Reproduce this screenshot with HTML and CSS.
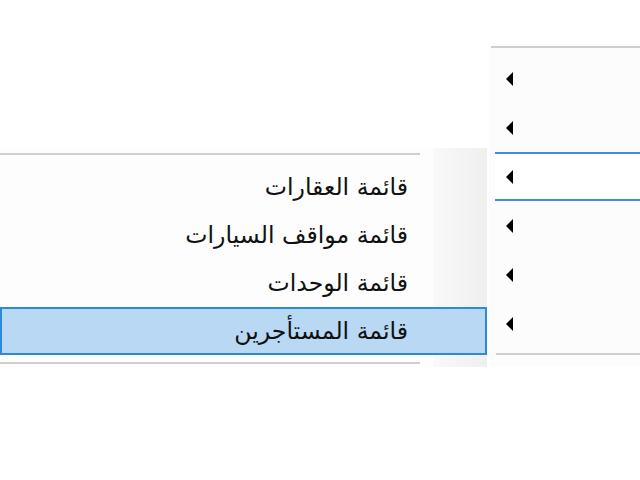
FILE: index.html
```html
<!DOCTYPE html>
<html lang="ar">

<head>
    <meta charset="UTF-8">
    <title>القوائم</title>
    <link rel="stylesheet" href="styles.css">
</head>

<body>
    <div class="desk">
        <div class="menu main-menu">
            <hr class="sep sep-top">
            <div class="item"><span class="arrow"></span></div>
            <div class="item"><span class="arrow"></span></div>
            <div class="item focus"><span class="arrow"></span></div>
            <div class="item"><span class="arrow"></span></div>
            <div class="item"><span class="arrow"></span></div>
            <div class="item"><span class="arrow"></span></div>
            <hr class="sep sep-bottom">
        </div>

        <div class="menu sub-menu" dir="rtl">
            <hr class="sep">
            <div class="subitem">قائمة العقارات</div>
            <div class="subitem">قائمة مواقف السيارات</div>
            <div class="subitem">قائمة الوحدات</div>
            <div class="subitem active">قائمة المستأجرين</div>
            <hr class="sep sep-low">
        </div>
    </div>
</body>

</html>
```

FILE: styles.css
```css
body {
    margin: 0;
    padding: 0;
    background-color: #ffffff;
    font-family: 'DejaVu Sans', 'Noto Sans', sans-serif;
}

.desk {
    position: relative;
    width: 640px;
    height: 480px;
    overflow: hidden;
}

.menu {
    position: absolute;
    box-sizing: border-box;
}

.sep {
    border: none;
    height: 2px;
    margin: 0;
    background-color: #cfcfcf;
}

.main-menu {
    left: 489px;
    top: 46px;
    width: 151px;
    height: 320px;
    background-color: #fcfcfc;
}

.main-menu .sep-top {
    margin: 0 0 6px 2px;
}

.main-menu .sep-bottom {
    margin: 5px 0 0 7px;
}

.item {
    height: 49px;
    box-sizing: border-box;
    display: flex;
    align-items: center;
    padding-left: 11px;
    margin-left: 6px;
}

.item.focus {
    border-top: 2px solid #3c8fe0;
    border-bottom: 2px solid #3c8fe0;
    background-color: #ffffff;
}

.arrow {
    width: 0;
    height: 0;
    border-top: 7px solid transparent;
    border-bottom: 7px solid transparent;
    border-right: 7px solid #000000;
}

.sub-menu {
    left: 0;
    top: 148px;
    width: 487px;
    height: 219px;
    padding-top: 5px;
    background: linear-gradient(to right, #fdfdfd 0, #fdfdfd 433px, #f9f9f9 433px, #efefef 100%);
}

.sub-menu .sep {
    margin: 0 67px 8px 0;
}

.sub-menu .sep-low {
    margin: 7px 67px 0 0;
}

.subitem {
    height: 48px;
    box-sizing: border-box;
    display: flex;
    align-items: center;
    padding-right: 79px;
    font-size: 23.6px;
    color: #111111;
}

.subitem.active {
    background-color: #b8d8f3;
    border: 2px solid #2d89da;
    padding-right: 77px;
}
```
